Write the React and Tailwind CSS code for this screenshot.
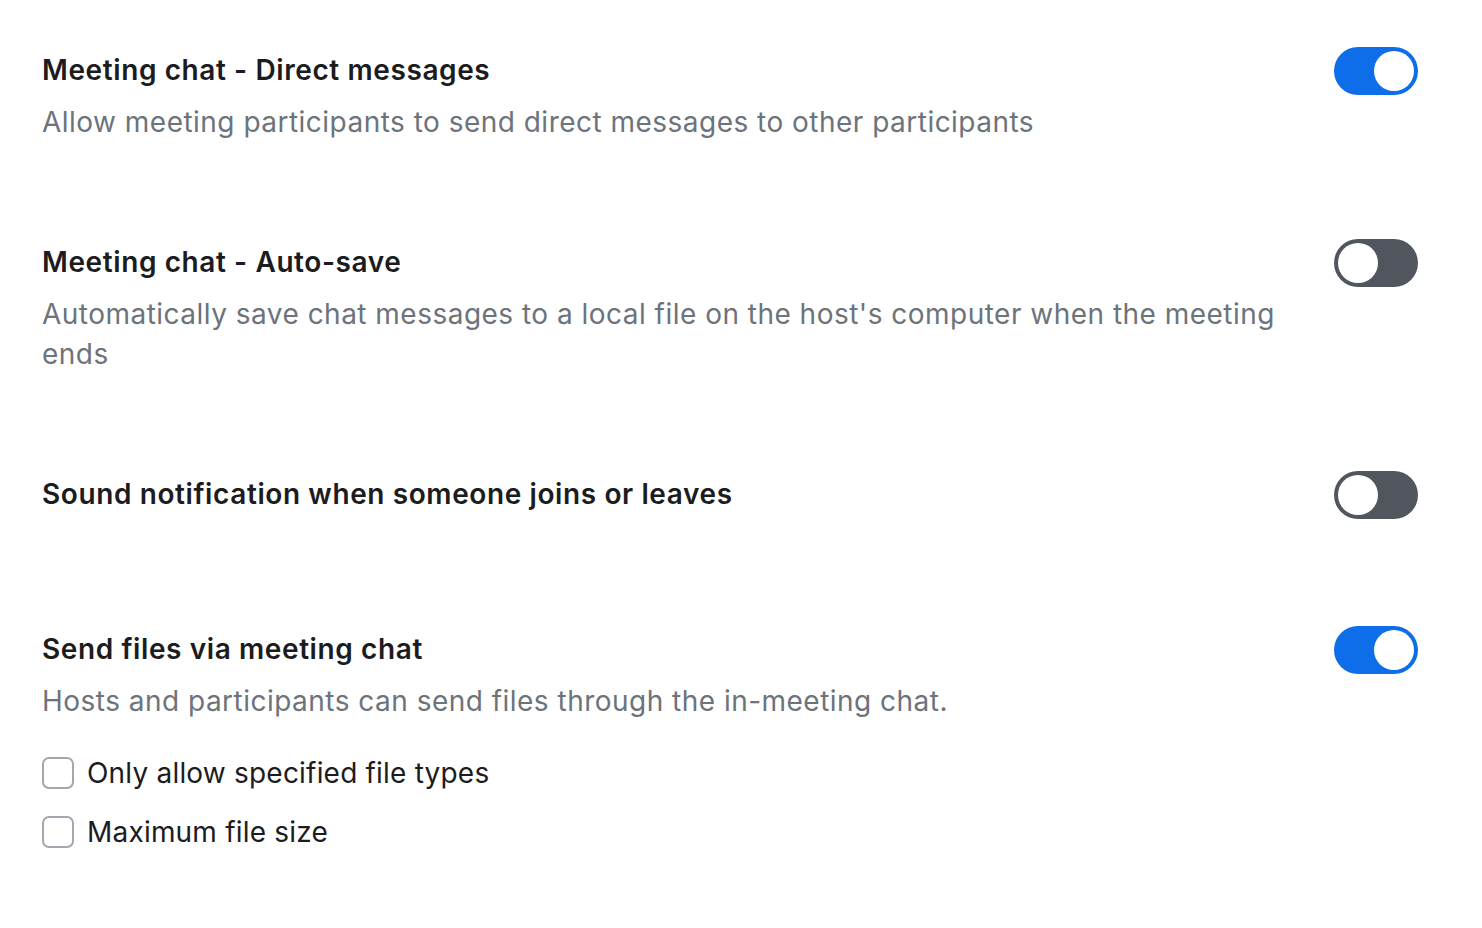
import { useState } from 'react'

function Toggle({ on }) {
  return (
    <div
      className={`flex items-center w-[84px] h-[48px] rounded-full px-[4px] shrink-0 ${
        on ? 'bg-[#0e6de8] justify-end' : 'bg-[#51565e] justify-start'
      }`}
    >
      <div className="w-[40px] h-[40px] rounded-full bg-white" />
    </div>
  )
}

function Checkbox({ label }) {
  const [checked, setChecked] = useState(false)
  return (
    <label className="flex items-center gap-[13px] cursor-pointer">
      <span
        onClick={() => setChecked(!checked)}
        className="w-[32px] h-[32px] rounded-[7px] border-2 border-[#a3a8b0] bg-white shrink-0"
      />
      <span className="text-[28px] leading-[40px] tracking-[0.2px] text-[#1c1c1e]">{label}</span>
    </label>
  )
}

function Setting({ title, desc, on, className = '', children }) {
  return (
    <div className={`flex justify-between ${className}`}>
      <div className="w-[1262px]">
        <h3 className="text-[28px] leading-[40px] font-semibold tracking-[0.6px] text-[#1c1c1e]">{title}</h3>
        {desc && (
          <p className="mt-3 text-[28px] leading-[40px] tracking-[0.48px] text-[#6d737b]">{desc}</p>
        )}
        {children}
      </div>
      <div className="mt-[-3px]">
        <Toggle on={on} />
      </div>
    </div>
  )
}

export default function App() {
  return (
    <div
      className="min-h-[928px] bg-white pl-[42px] pr-[64px] pt-[50px]"
      style={{ fontFamily: 'Inter, "Noto Sans", sans-serif' }}
    >
      <Setting
        title="Meeting chat - Direct messages"
        desc="Allow meeting participants to send direct messages to other participants"
        on
      />
      <Setting
        className="mt-[100px]"
        title="Meeting chat - Auto-save"
        desc="Automatically save chat messages to a local file on the host's computer when the meeting ends"
        on={false}
      />
      <Setting
        className="mt-[100px]"
        title="Sound notification when someone joins or leaves"
        on={false}
      />
      <Setting
        className="mt-[110px]"
        title="Send files via meeting chat"
        desc="Hosts and participants can send files through the in-meeting chat."
        on
      >
        <div className="mt-[32px] flex flex-col gap-[19px]">
          <Checkbox label="Only allow specified file types" />
          <Checkbox label="Maximum file size" />
        </div>
      </Setting>
    </div>
  )
}
